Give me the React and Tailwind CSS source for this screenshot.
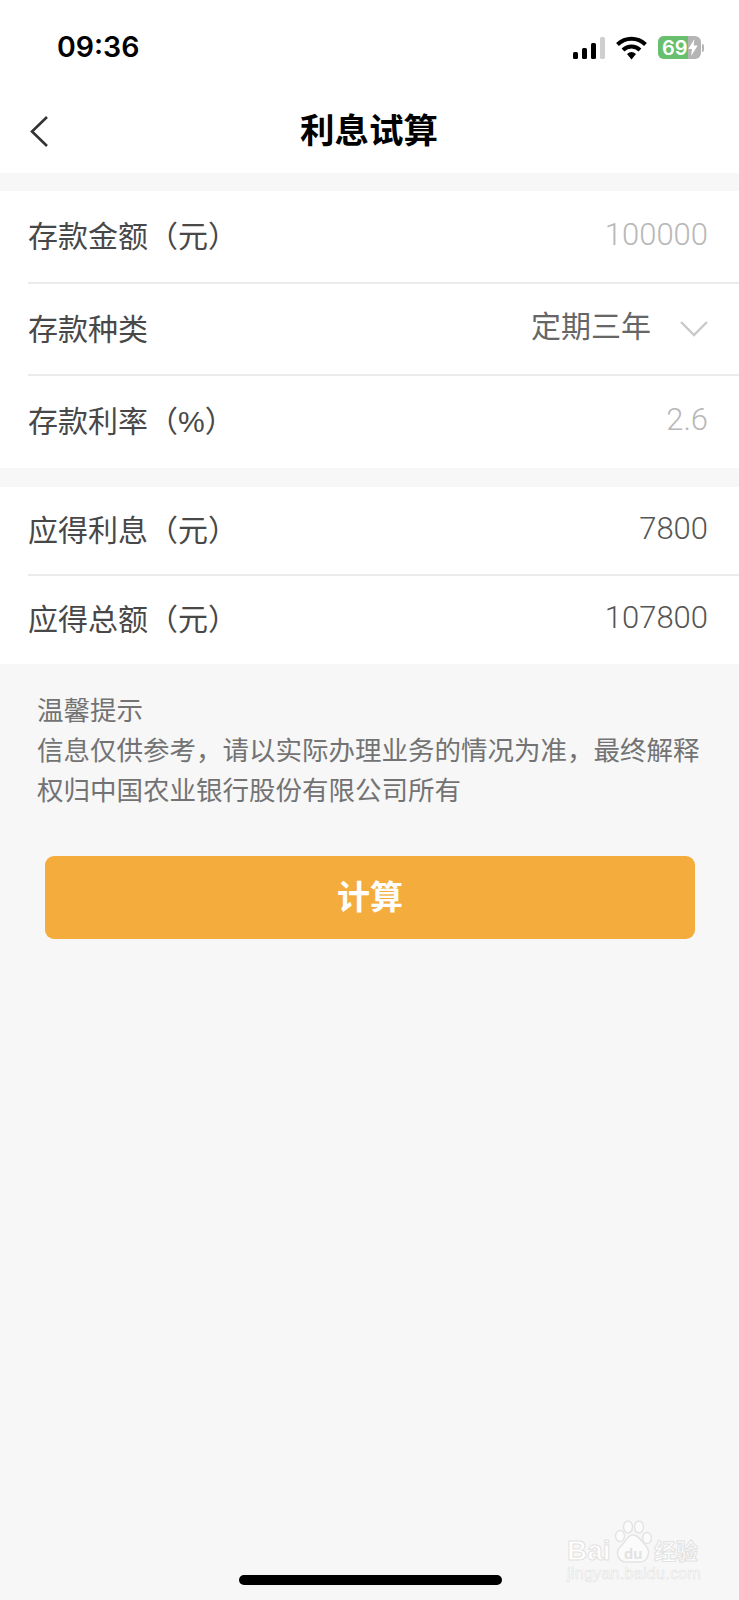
const FONT = "font-['Liberation_Sans','Noto_Sans_CJK_SC',sans-serif]";

function Row({ label, value, muted, last, height, children }) {
  return (
    <div className={`flex items-center pl-[28px] pr-[31px] bg-white relative ${height}`}>
      <span className="pb-[1px] text-[30px] leading-none text-[#484848]">{label}</span>
      <div className="ml-auto flex items-center pb-[6px]">
        {children}
        {value && (
          <span className={`font-['Roboto'] text-[31px] font-light leading-none ${muted ? "text-[#b8b8b8]" : "text-[#555555]"}`}>
            {value}
          </span>
        )}
      </div>
      {!last && <div className="absolute left-[28px] right-0 bottom-0 h-[2px] bg-[#ebebeb]" />}
    </div>
  );
}

function StatusIcons() {
  return (
    <div className="flex items-center">
      <svg width="32" height="22" viewBox="0 0 32 22" className="mr-[10px]">
        <rect x="0" y="15" width="5" height="7" rx="1.5" fill="#000" />
        <rect x="9" y="11" width="5" height="11" rx="1.5" fill="#000" />
        <rect x="18" y="6" width="5" height="16" rx="1.5" fill="#000" />
        <rect x="27" y="0" width="5" height="22" rx="1.5" fill="#cfcfcf" />
      </svg>
      <svg width="33" height="24" viewBox="0 0 32 24" className="mr-[10px]">
        <path d="M2 8.5C10 .8 22 .8 30 8.5" fill="none" stroke="#000" strokeWidth="4" />
        <path d="M7.5 14C12.5 9.4 19.5 9.4 24.5 14" fill="none" stroke="#000" strokeWidth="4" />
        <path d="M11.5 18C14.5 15.2 17.5 15.2 20.5 18L16 23.5Z" fill="#000" />
      </svg>
      <div className="relative flex h-[23px] w-[43px] items-center overflow-hidden rounded-[6px] bg-[#b4b4b4]">
        <div className="absolute inset-y-0 left-0 w-[30px] bg-[#68c06e]" />
        <span className="relative pl-[4px] font-['Inter'] text-[20px] font-semibold leading-none text-white">69</span>
        <svg width="10" height="17" viewBox="0 0 10 18" className="absolute right-[3px] top-[3px]">
          <path d="M6.5 0 0 10.5h4L3 18l7-11H5.8Z" fill="#fff" />
        </svg>
      </div>
      <div className="ml-[1px] h-[8px] w-[2px] rounded-r-full bg-[#b4b4b4]" />
    </div>
  );
}

// faint watermark in the bottom corner
function Watermark() {
  return (
    <div className="absolute left-[567px] top-[1520px] h-[62px] w-[134px] text-white">
      <svg width="38" height="44" viewBox="0 0 38 44" className="absolute left-[47px] top-0">
        <g fill="#fbfbfb" stroke="#e4e4e4" strokeWidth="1.5">
          <ellipse cx="6" cy="16" rx="4.5" ry="5.5" />
          <ellipse cx="14" cy="7" rx="4.5" ry="6" />
          <ellipse cx="25" cy="7" rx="4.5" ry="6" />
          <ellipse cx="33" cy="18" rx="4.5" ry="5.5" />
          <path d="M19 15C25 15 27 21 32 26 37 31 34 42 26 42H12C4 42 1 32 6 27 12 22 13 15 19 15Z" />
        </g>
      </svg>
      <span className="absolute left-0 top-[15px] text-[28px] font-bold leading-[32px] [-webkit-text-stroke:1px_#e2e2e2]">Bai</span>
      <span className="absolute left-[57px] top-[26px] text-[15px] font-bold leading-[15px] text-[#e2e2e2]">du</span>
      <span className="absolute left-[87px] top-[20px] text-[22px] font-bold leading-[24px] [-webkit-text-stroke:1px_#e2e2e2]">经验</span>
      <span className="absolute left-0 top-[46px] whitespace-nowrap text-[16px] leading-[16px] tracking-[0.3px] [-webkit-text-stroke:0.6px_#e4e4e4]">
        jingyan.baidu.com
      </span>
    </div>
  );
}

export default function App() {
  return (
    <div className={`relative h-[1600px] w-[739px] overflow-hidden bg-[#f7f7f7] ${FONT}`}>
      {/* status bar */}
      <div className="flex h-[88px] items-center bg-white pl-[57px] pr-[35px] pt-[7px]">
        <span className="font-['Inter'] text-[28.5px] font-semibold leading-none text-black">09:36</span>
        <div className="ml-auto">
          <StatusIcons />
        </div>
      </div>

      {/* nav */}
      <div className="relative flex h-[85px] items-center justify-center bg-white pt-[2px] pr-[1px]">
        <svg width="18" height="31" viewBox="0 0 18 31" className="absolute left-[30px] top-[28px]">
          <path d="M17 1 2 15.5 17 30" fill="none" stroke="#333333" strokeWidth="2.6" />
        </svg>
        <h1 className="text-[34.5px] font-bold leading-none text-black">利息试算</h1>
      </div>

      <div className="mt-[18px]">
        <Row label="存款金额（元）" value="100000" muted height="h-[93px]" />
        <Row label="存款种类" height="h-[92px]">
          <span className="text-[30px] leading-none text-[#666666]">定期三年</span>
          <svg width="28" height="16" viewBox="0 0 28 16" className="ml-[29px] mt-[3px]">
            <path d="M1 1 14 14 27 1" fill="none" stroke="#c9c9c9" strokeWidth="2.4" />
          </svg>
        </Row>
        <Row label="存款利率（%）" value="2.6" muted last height="h-[92px]" />
      </div>

      <div className="mt-[19px]">
        <Row label="应得利息（元）" value="7800" height="h-[89px]" />
        <Row label="应得总额（元）" value="107800" last height="h-[88px]" />
      </div>

      {/* tips */}
      <div className="pl-[37px] pr-[30px] pt-[27px] text-[26.5px] leading-[40px] text-[#737373]">
        <p>温馨提示</p>
        <p>信息仅供参考，请以实际办理业务的情况为准，最终解释权归中国农业银行股份有限公司所有</p>
      </div>

      <button className="ml-[45px] mt-[45px] flex h-[83px] w-[650px] items-center justify-center rounded-[9px] bg-[#f4ad3c] text-[33px] font-bold text-white">
        计算
      </button>

      <div className="absolute bottom-[15px] left-[239px] h-[10px] w-[263px] rounded-full bg-black" />
      <Watermark />
    </div>
  );
}
